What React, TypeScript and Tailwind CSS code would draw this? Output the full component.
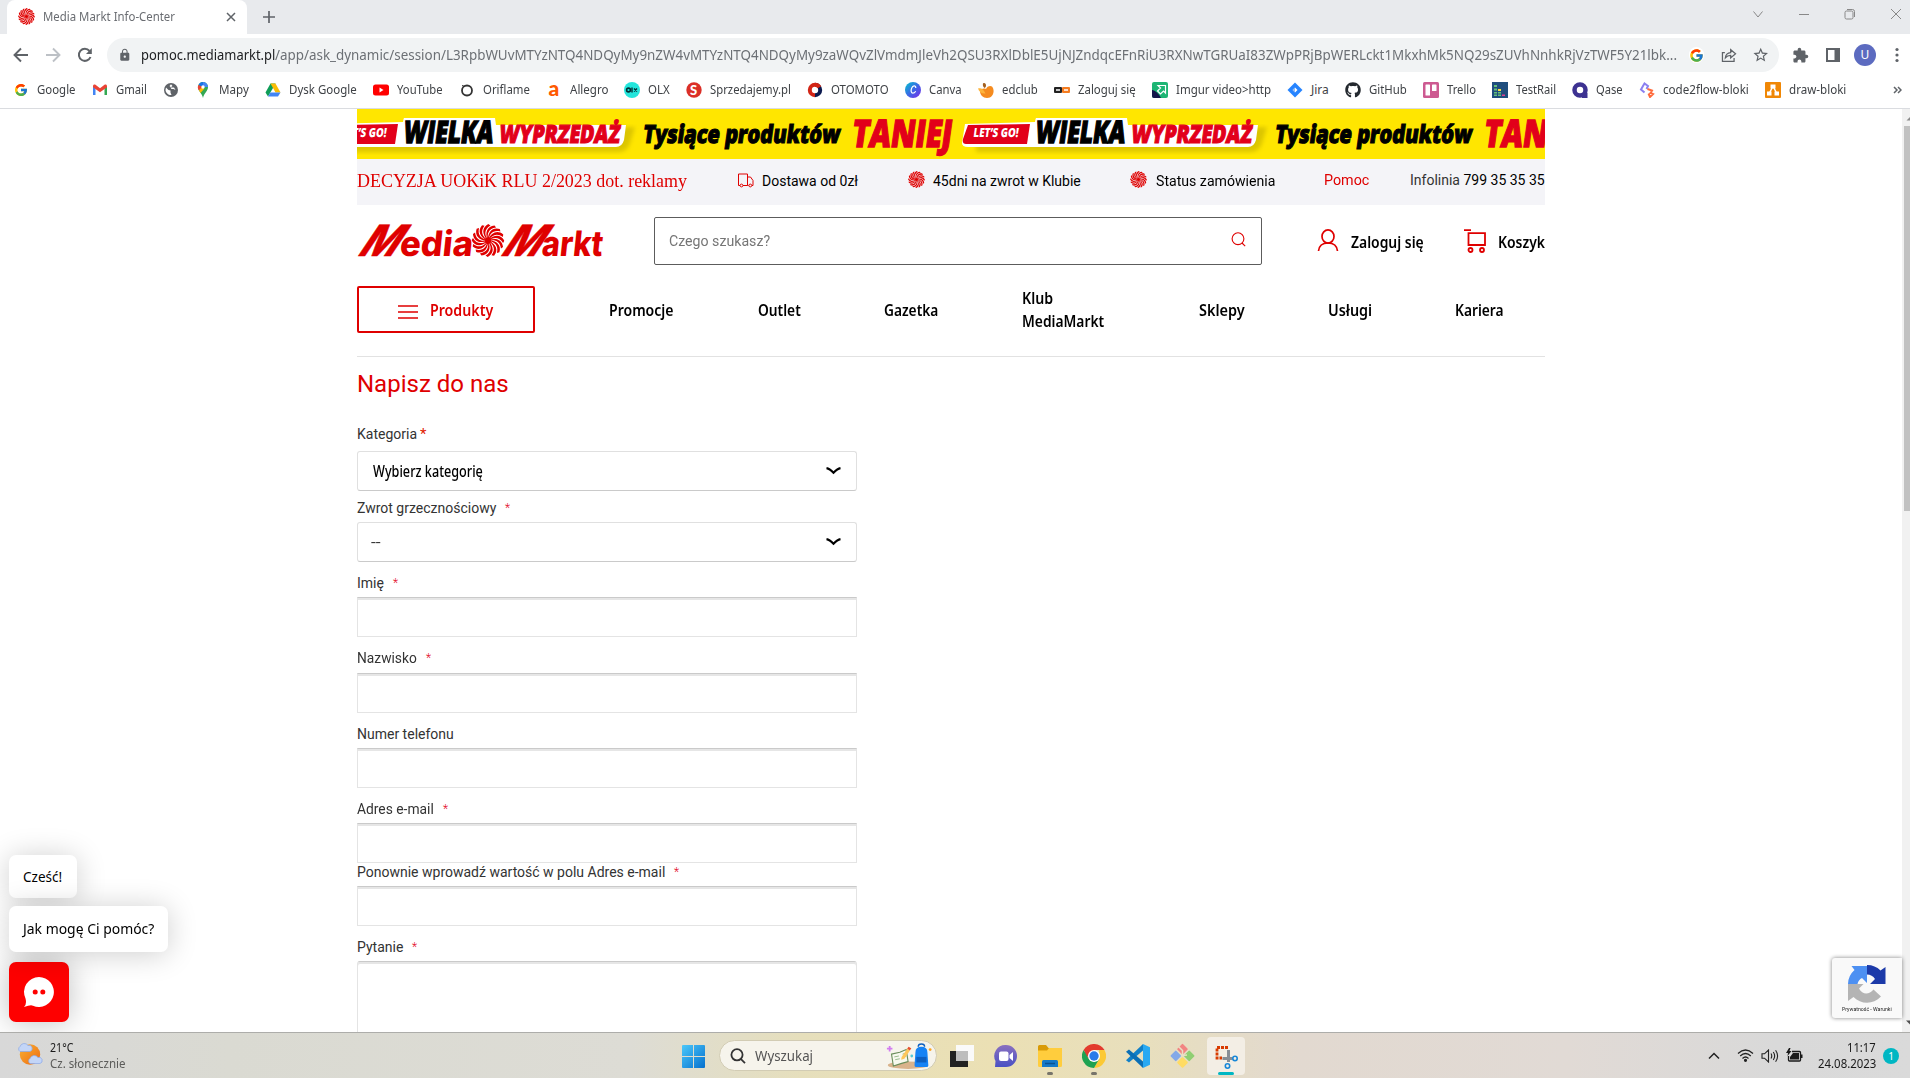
import React, { useLayoutEffect, useRef, useState } from "react";
import { FaGithub } from "react-icons/fa";
import { FcGoogle } from "react-icons/fc";
import { MdExtension, MdLock, MdStarBorder } from "react-icons/md";

/* Single-line text squeezed or stretched to a given width. */
function Fit({ w, className = "", children }: { w: number; className?: string; children: React.ReactNode }) {
  const ref = useRef<HTMLSpanElement>(null);
  const [scale, setScale] = useState(1);
  useLayoutEffect(() => {
    if (ref.current && ref.current.offsetWidth) setScale(w / ref.current.offsetWidth);
  }, [w]);
  return (
    <span className={"block shrink-0 whitespace-nowrap " + className} style={{ width: w }}>
      <span ref={ref} className="inline-block origin-left" style={{ transform: `scaleX(${scale})` }}>
        {children}
      </span>
    </span>
  );
}

const ARMS = Array.from({ length: 16 }, (_, i) => i * 22.5);
const ARM_PATH = "M0.5 0.3 C5 -3.6 11 -4 14.6 2.4 L15.9 0.3 C12.500 -6.2 6 -5.800 0.5 -0.8Z";

function Swirl({ size, className = "" }: { size: number; className?: string }) {
  return (
    <svg width={size} height={size} viewBox="-16 -16 32 32" className={"shrink-0 " + className}>
      <circle r="2.500" fill="#df0000" />
      {ARMS.map((a) => (
        <path key={a} transform={`rotate(${a})`} d={ARM_PATH} fill="#df0000" />
      ))}
    </svg>
  );
}

const BANNER_FONT = "'Open Sans', 'Noto Sans', sans-serif";

function PromoUnit({ x }: { x: number }) {
  return (
    <g transform={`translate(${x} 0)`} fontFamily={BANNER_FONT} fontWeight="800">
      <path d="M14 26 L305 18 L300 34 Q298 42 290 43 L14 43Z" fill="#d3bd00" opacity="0.8" filter="url(#soft)" />
      <path d="M3 15 L73 13 L74 9 L165 9 L166 16 L296 16 L294 31 Q292 38 286 38 L6 38 Q0 38 0 34Z" fill="#fff" />
      <path d="M6 16 L68 15 L65 35 L4 35 Q0 35 1 30Z" fill="#e2001a" />
      <g transform="skewX(-8)">
        <text x="15" y="28.500" fontSize="12.500" textLength="45" lengthAdjust="spacingAndGlyphs" fill="#fff">LET’S GO!</text>
        <text x="77" y="34" fontSize="31" textLength="90" lengthAdjust="spacingAndGlyphs" stroke="#fff" strokeWidth="4" fill="#fff">WIELKA</text>
        <text x="77" y="34" fontSize="31" textLength="90" lengthAdjust="spacingAndGlyphs" stroke="#000" strokeWidth="1.400">WIELKA</text>
        <text x="173" y="34" fontSize="25" textLength="121" lengthAdjust="spacingAndGlyphs" fill="#e2001a" stroke="#e2001a" strokeWidth="1.200">WYPRZEDAŻ</text>
        <text x="317" y="34" fontSize="25" textLength="197" lengthAdjust="spacingAndGlyphs" stroke="#000" strokeWidth="1.100">Tysiące produktów</text>
        <text x="526" y="38" fontSize="38" textLength="100" lengthAdjust="spacingAndGlyphs" fill="#e2001a" stroke="#e2001a" strokeWidth="1.400">TANIEJ</text>
      </g>
    </g>
  );
}

function Banner() {
  return (
    <svg width="1188" height="50" className="block overflow-hidden bg-[#ffe600]" viewBox="0 0 1188 50">
      <defs>
        <filter id="soft"><feGaussianBlur stdDeviation="2" /></filter>
      </defs>
      <PromoUnit x={-27} />
      <PromoUnit x={605} />
    </svg>
  );
}

function Logo() {
  return (
    <svg width="250" height="34" viewBox="0 0 250 34" className="overflow-visible" fontFamily="Inter, Lato, sans-serif" fontWeight="800" fill="#df0000">
      <g transform="translate(-1 32) skewX(-34)">
        <text x="0" y="0" fontSize="43" textLength="37" lengthAdjust="spacingAndGlyphs" stroke="#df0000" strokeWidth="0.5">M</text>
      </g>
      <g transform="translate(42 32) skewX(-6)">
        <text x="0" y="0" fontSize="35" textLength="73" lengthAdjust="spacingAndGlyphs">edia</text>
      </g>
      <circle cx="131" cy="16.500" r="16.500" fill="#fff" />
      <svg x="114.500" y="0" width="33" height="33" viewBox="-16 -16 32 32">
        <circle r="3" />
        {ARMS.map((a) => (
          <path key={a} transform={`rotate(${a})`} d={ARM_PATH} />
        ))}
      </svg>
      <g transform="translate(142 32) skewX(-34)">
        <text x="0" y="0" fontSize="43" textLength="37" lengthAdjust="spacingAndGlyphs" stroke="#df0000" strokeWidth="0.500">M</text>
      </g>
      <g transform="translate(184 32) skewX(-6)">
        <text x="0" y="0" fontSize="35" textLength="61" lengthAdjust="spacingAndGlyphs">arkt</text>
      </g>
    </svg>
  );
}

/* ---------- bookmark icons ---------- */
const Ic = ({ children, vb = "0 0 16 16" }: { children: React.ReactNode; vb?: string }) => (
  <svg width="16" height="16" viewBox={vb} className="shrink-0">{children}</svg>
);

const bookmarks: { icon: React.ReactNode; label?: string; w?: number }[] = [
  { icon: <FcGoogle size={16} className="shrink-0 scale-90" />, label: "Google", w: 39 },
  { icon: <Ic><path d="M1 13V4l2.500 1.500V13z" fill="#4285f4" /><path d="M12.500 13V5.500L15 4v9z" fill="#34a853" /><path d="M1 4c0-1.500 1.500-2 2.500-1.200L8 6.200l4.500-3.400C13.500 2 15 2.500 15 4v1.200L8 10.200 1 5.200z" fill="#ea4335" /></Ic>, label: "Gmail", w: 31 },
  { icon: <Ic><circle cx="8" cy="8" r="7" fill="#5f6368" /><path d="M3 5.500 5.500 8l2 .5v2l1 2.500c-3 .3-5.800-2-6-5z M8 2.200 6.500 4l1.500 1.500h3L12.500 8l-2-1h-2l-1-1.500L9.500 4z M13.500 8l-3 2.500" fill="#fff" /></Ic> },
  { icon: <Ic><path d="M8 0a5 5 0 0 0-5 5c0 4 4 6 5 11 1-5 5-7 5-11a5 5 0 0 0-5-5" fill="#34a853" /><path d="M8 0a5 5 0 0 1 5 5L8 5z" fill="#4285f4" /><path d="M8 0a5 5 0 0 0-4.500 3L8 5z" fill="#1a73e8" /><path d="M3.400 3A5 5 0 0 0 4 8.500L8 5z" fill="#ea4335" /><path d="M4 8.300 8 4l1 3-3.500 4z" fill="#fbbc04" /><circle cx="8" cy="5" r="1.700" fill="#fff" /></Ic>, label: "Mapy", w: 30 },
  { icon: <Ic><path d="M5.500 1.500h5L8 6 3 14.500.5 10.500z" fill="#0f9d58" /><path d="M5.500 1.500h5l5 9h-5z" fill="#fbbc04" /><path d="M5.500 10.500h10L13 14.500H3z" fill="#4285f4" /></Ic>, label: "Dysk Google", w: 68 },
  { icon: <Ic><rect x="0" y="2.500" width="16" height="11" rx="2.500" fill="#f00" /><path d="M6.500 5.500v5l4-2.500z" fill="#fff" /></Ic>, label: "YouTube", w: 46 },
  { icon: <Ic><circle cx="8" cy="8.500" r="5" fill="none" stroke="#333" strokeWidth="1.800" /><path d="M3 3.500 6 4.500" stroke="#333" strokeWidth="1" /></Ic>, label: "Oriflame", w: 46.5 },
  { icon: <Ic><text x="2.500" y="14" fontFamily="Lato, sans-serif" fontWeight="900" fontSize="21" fill="#ff5a00">a</text></Ic>, label: "Allegro", w: 38.5 },
  { icon: <Ic><circle cx="8" cy="8" r="8" fill="#23e5db" /><circle cx="4.500" cy="8" r="1.900" fill="none" stroke="#002f34" strokeWidth="1.600" /><path d="M8 5.500v5M10 6.500l3 3m0-3-3 3" stroke="#002f34" strokeWidth="1.400" /></Ic>, label: "OLX", w: 22 },
  { icon: <Ic><circle cx="8" cy="8" r="7.700" fill="#db2f27" /><text x="4" y="12.500" fontFamily="Lato, sans-serif" fontWeight="900" fontSize="13" fill="#fff">S</text></Ic>, label: "Sprzedajemy.pl", w: 81 },
  { icon: <Ic><path d="M8 2.800a5.200 5.200 0 0 0 0 10.400" fill="none" stroke="#d22516" strokeWidth="4" /><path d="M8 2.800a5.200 5.200 0 0 1 0 10.400" fill="none" stroke="#0c1a4f" strokeWidth="4" /><path d="M8 2.800q3 0 4.500 2.500" fill="none" stroke="#d22516" strokeWidth="4" /></Ic>, label: "OTOMOTO", w: 58 },
  { icon: <Ic><defs><linearGradient id="cv" x2="1" y2="1"><stop stopColor="#00c4cc" /><stop offset=".5" stopColor="#3b69e6" /><stop offset="1" stopColor="#7d2ae8" /></linearGradient></defs><circle cx="8" cy="8" r="8" fill="url(#cv)" /><path d="M10.800 6c0-3-3-2.500-4.200.2-1 2.500-.4 5 1.200 5 1.300 0 2.200-.8 2.900-1.900" fill="none" stroke="#fff" strokeWidth="1.200" /></Ic>, label: "Canva", w: 33 },
  { icon: <Ic><path d="M2 9c1-2.500 4-3 6-2 1-2.500 4-4 6-2.500 3 3 2 11.500-5 11.500-4 0-7-3-7-7" fill="#f58b1f" /><path d="M5 1.500c1.500-1 3 0 3 2 0 1-.5 2-1.500 2.500C5 5 4.500 3 5 1.500" fill="#a3601f" /><path d="M0 6.500c3-1 5.500.5 7.500 5-3.500.5-6.500-1.500-7.500-5" fill="#fdb43c" /></Ic>, label: "edclub", w: 36 },
  { icon: <Ic><rect x="0" y="5" width="8" height="6" rx="1" fill="#222" /><rect x="8" y="5" width="8" height="6" rx="1" fill="#f57c20" /><path d="M2 8h4m4 0h4" stroke="#fff" strokeWidth="1.500" /></Ic>, label: "Zaloguj się", w: 58 },
  { icon: <Ic><rect width="16" height="16" rx="2" fill="#1db574" /><path d="M6 3.500h7.500V11l-2-2-3 3-3-3 3-3z" fill="none" stroke="#fff" strokeWidth="1.200" /><path d="M0 8c3 0 7 4 9 8H2a2 2 0 0 1-2-2z" fill="#14154a" /></Ic>, label: "Imgur video>http", w: 95 },
  { icon: <Ic><path d="m8 .5 7.500 7.500L8 15.500.5 8z" fill="#2684ff" /><path d="m8 5.500 2.500 2.500L8 10.500 5.500 8z" fill="#fff" /><path d="M8 .5v5L5.500 8 8 10.500" fill="#1668e0" opacity=".45" /></Ic>, label: "Jira", w: 18 },
  { icon: <FaGithub size={16} className="shrink-0 text-[#24292f]" />, label: "GitHub", w: 38 },
  { icon: <Ic><rect width="16" height="16" rx="1.500" fill="#cd5a91" /><rect x="2.500" y="2.500" width="4.500" height="11" rx=".6" fill="#fff" /><rect x="9" y="2.500" width="4.500" height="6.500" rx=".6" fill="#fff" /></Ic>, label: "Trello", w: 29 },
  { icon: <Ic><rect width="16" height="16" fill="#1f4d7d" /><path d="M2 3h3v2H2zM2 6.500h3v2H2zM2 10h3v1.500H2zM2 12.500h3V14H2zM6 10h3v1.500H6zM6 12.500h3V14H6z" fill="#65c179" /><path d="M6 7h3v2H6z" fill="#ffe13c" /><path d="M10 12.500h3V14h-3z" fill="#e0408f" /></Ic>, label: "TestRail", w: 40 },
  { icon: <Ic><circle cx="8" cy="8" r="5.500" fill="none" stroke="#3d3291" strokeWidth="4.500" /><path d="M10 11h5.500v5H10z" fill="#3d3291" /></Ic>, label: "Qase", w: 27 },
  { icon: <Ic><g fill="none" strokeWidth="2"><path d="M5.500 10.500 2 7.500 4 4l1.500-2.500L9 4 7.500 7" stroke="#8b80f0" /><path d="m8.500 7 4.500 1.500L11.500 11l2.500 1-3 3-1.500-3.500" stroke="#ff6b3d" /></g></Ic>, label: "code2flow-bloki", w: 86 },
  { icon: <Ic><rect width="16" height="16" rx="1" fill="#f08705" /><path d="m8 4-4 8m4-8 4 8" stroke="#fff" strokeWidth="1.500" /><path d="M5.500 2.500h5v4h-5zM2 9.500h4.500v4H2zM9.500 9.500H14v4H9.500z" fill="#fff" /></Ic>, label: "draw-bloki", w: 57 },
];

function Browser() {
  return (
    <header className="shrink-0 font-['Noto_Sans','Open_Sans',sans-serif]">
      <div className="flex h-[34px] items-start bg-[#e8eaed] pl-[7px]">
        <div className="flex h-[34px] w-[240px] items-center rounded-t-lg bg-white pl-[11px] pb-px">
          <Swirl size={17} />
          <Fit w={132} className="ml-2 text-[12px] leading-4 text-[#6a6d72]">Media Markt Info-Center</Fit>
          <svg width="10" height="10" viewBox="0 0 10 10" className="ml-[51px]" stroke="#5f6368" strokeWidth="1.500"><path d="m1 1 8 8M9 1 1 9" /></svg>
        </div>
        <svg width="14" height="14" viewBox="0 0 14 14" className="ml-[15px] mt-[10px]" stroke="#5f6368" strokeWidth="1.700"><path d="M7 1v12M1 7h12" /></svg>
        <div className="ml-auto mr-2 mt-2 flex items-center gap-[34px] text-[#888]">
          <svg width="12" height="12" viewBox="0 0 12 12" fill="none" stroke="currentColor"><path d="m1.500 3.500 4.500 5.500 4.500-5.500" /></svg>
          <svg width="12" height="12" viewBox="0 0 12 12" fill="none" stroke="currentColor"><path d="M1 6.500h10" /></svg>
          <svg width="12" height="12" viewBox="0 0 12 12" fill="none" stroke="currentColor"><rect x="1" y="3" width="8" height="8" rx="1.500" /><path d="M3 1.500h5.500a2 2 0 0 1 2 2V9" /></svg>
          <svg width="12" height="12" viewBox="0 0 12 12" fill="none" stroke="currentColor"><path d="m1 1 10 10M11 1 1 11" /></svg>
        </div>
      </div>
      <div className="flex h-[42px] items-center pl-[13px]">
        <svg width="16" height="16" viewBox="0 0 16 16" fill="none" stroke="#5f6368" strokeWidth="1.900"><path d="M15 8H2M8 1.500 1.500 8 8 14.500" /></svg>
        <svg width="16" height="16" viewBox="0 0 16 16" fill="none" stroke="#bdc1c6" strokeWidth="1.900" className="ml-4"><path d="M1 8h13M8 1.500 14.500 8 8 14.500" /></svg>
        <svg width="16" height="16" viewBox="0 0 16 16" fill="none" stroke="#5f6368" strokeWidth="2" className="ml-4"><path d="M13.500 10A6 6 0 1 1 12.500 4" /><path d="M14.800 1v6H9z" fill="#5f6368" stroke="none" /></svg>
        <div className="ml-[14px] flex h-[34px] w-[1672px] items-center rounded-full bg-[#f1f3f4] pl-[11px] pr-[10px]">
          <MdLock size={14} className="text-[#5f6368]" />
          <div className="ml-[9px] flex text-[14px] leading-5">
            <Fit w={134} className="text-[#202124]">pomoc.mediamarkt.pl</Fit>
            <Fit w={1402} className="text-[#6c7075]">/app/ask_dynamic/session/L3RpbWUvMTYzNTQ4NDQyMy9nZW4vMTYzNTQ4NDQyMy9zaWQvZlVmdmJleVh2QSU3RXlDblE5UjNJZndqcEFnRiU3RXNwTGRUaI83ZWpPRjBpWERLckt1MkxhMk5NQ29sZUVhNnhkRjVzTWF5Y21lbk...</Fit>
          </div>
          <div className="ml-[12px] grid size-4 place-items-center rounded-full bg-white"><FcGoogle size={15} /></div>
          <svg width="16" height="16" viewBox="0 0 16 16" fill="none" stroke="#5f6368" strokeWidth="1.300" className="ml-[17px]"><path d="M4 5.500H1.500v9h12V11" /><path d="M4.500 11c.3-3.500 2.500-5.300 5.500-5.500V2.500L15 6.800 10 11V8.500C7.500 8.500 6 9.200 4.500 11z" /></svg>
          <MdStarBorder size={18} className="ml-[15px] text-[#5f6368]" />
        </div>
        <MdExtension size={17} className="ml-[13px] text-[#5f6368]" />
        <svg width="14" height="14" viewBox="0 0 14 14" className="ml-[17px]"><path d="M1 1h12v12H1z" fill="none" stroke="#5f6368" strokeWidth="2" /><path d="M8.500 1H13v12H8.500z" fill="#5f6368" /></svg>
        <div className="ml-[14px] grid size-[22px] place-items-center rounded-full bg-[#5c6bc0] text-[12px] leading-none text-white">U</div>
        <svg width="4" height="16" viewBox="0 0 4 16" className="ml-[19px]" fill="#5f6368"><circle cx="2" cy="2.500" r="1.600" /><circle cx="2" cy="8" r="1.600" /><circle cx="2" cy="13.500" r="1.600" /></svg>
      </div>
      <div className="flex h-[33px] items-center border-b border-[#dadce0] pl-[13px] pb-1">
        <div className="flex items-center gap-4">
          {bookmarks.map((b, i) => (
            <div key={i} className="flex items-center gap-2">
              {b.icon}
              {b.label && <Fit w={b.w!} className="text-[12px] leading-4 text-[#3f4246]">{b.label}</Fit>}
            </div>
          ))}
        </div>
        <svg width="9" height="8" viewBox="0 0 9 8" fill="none" stroke="#5f6368" strokeWidth="1.500" className="ml-auto mr-2"><path d="m1 1 3 3-3 3M5 1l3 3-3 3" /></svg>
      </div>
    </header>
  );
}

const navItems = [
  { lines: ["Promocje"], w: [65], gap: "ml-[74px]" },
  { lines: ["Outlet"], w: [43], gap: "ml-[84px]" },
  { lines: ["Gazetka"], w: [54], gap: "ml-[83px]" },
  { lines: ["Klub", "MediaMarkt"], w: [31, 82], gap: "ml-[84px]" },
  { lines: ["Sklepy"], w: [46], gap: "ml-[95px]" },
  { lines: ["Usługi"], w: [44], gap: "ml-[83px]" },
  { lines: ["Kariera"], w: [49], gap: "ml-[83px]" },
];

function Label({ text, w, star = true }: { text: string; w: number; star?: boolean }) {
  return (
    <div className="flex h-5 items-center text-[14px] leading-5 text-[#333]">
      <Fit w={w}>{text}</Fit>
      {star && <span className="ml-[9px] text-[12px] font-light text-[#e2001a]">*</span>}
    </div>
  );
}

const inputBase = "w-[500px] shrink-0 border border-[#e4e4e4] border-t-[#cacaca] shadow-[inset_0_2px_0_#e6e6e6]";

function TextField({ text, w, star, top, gap = "mt-[4px]" }: { text: string; w: number; star?: boolean; top: string; gap?: string }) {
  return (
    <div className={top}>
      <Label text={text} w={w} star={star} />
      <div className={inputBase + " h-[40px] " + gap} />
    </div>
  );
}

function Arrow() {
  return <svg width="15" height="9" viewBox="0 0 15 9" fill="none" stroke="#000" strokeWidth="2.200"><path d="M.5 1.200q3 .5 7 4.500 4-4 7-4.500" /></svg>;
}

function Page() {
  return (
    <main className="ml-[357px] w-[1188px] font-[Roboto,sans-serif]">
      <Banner />
      <div className="flex h-[46px] bg-[#f4f4f8] pt-[12px] text-[14px] leading-5 text-black">
        <Fit w={330} className="font-['Liberation_Serif',serif] text-[18px] leading-5 text-[#df0000]">DECYZJA UOKiK RLU 2/2023 dot. reklamy</Fit>
        <svg width="17" height="15" viewBox="0 0 17 15" className="ml-[50px] mt-[2px]" fill="none" stroke="#df0000" strokeWidth="1"><path d="M3 12.500H1.500V1h9v11.500H6M10.500 4h3l2.500 3.500v5h-1M10.500 12.500h1" /><circle cx="4.500" cy="12.500" r="1.400" /><circle cx="13.300" cy="12.500" r="1.400" /></svg>
        <Fit w={96} className="ml-[8px]">Dostawa od 0zł</Fit>
        <Swirl size={17} className="ml-[50px]" />
        <Fit w={148} className="ml-[8px]">45dni na zwrot w Klubie</Fit>
        <Swirl size={17} className="ml-[49px]" />
        <Fit w={119} className="ml-[9px]">Status zamówienia</Fit>
        <Fit w={45} className="-mt-px ml-[49px] text-[#df0000]">Pomoc</Fit>
        <Fit w={135} className="-mt-px ml-auto text-[#333]">Infolinia <span className="text-black">799 35 35 35</span></Fit>
      </div>
      <div className="flex h-[72px] pt-[12px]">
        <div className="w-[297px] pt-[7px]"><Logo /></div>
        <div className="flex h-[48px] w-[608px] items-center rounded-[2px] border border-[#5c5c5c] pl-[14px] pr-[15px] text-[14px] text-[#757575]">
          <Fit w={101}>Czego szukasz?</Fit>
          <svg width="15" height="15" viewBox="0 0 15 15" fill="none" stroke="#df0000" strokeWidth="1.100" className="ml-auto -mt-[3px]"><circle cx="7" cy="6.700" r="5.900" /><path d="m11 11 3.200 3.200" /></svg>
        </div>
        <div className="ml-auto flex font-['Noto_Sans',sans-serif] text-[16px] font-semibold leading-6 text-black">
          <svg width="22" height="23" viewBox="0 0 22 23" className="mt-[12px]" fill="none" stroke="#df0000" strokeWidth="1.700"><ellipse cx="11" cy="7.500" rx="6" ry="6.600" /><path d="M1.500 22c.5-5 4-8 9.500-8s9 3 9.500 8" /></svg>
          <Fit w={73} className="ml-[12px] mt-[13px]">Zaloguj się</Fit>
          <svg width="23" height="24" viewBox="0 0 23 24" className="ml-[40px] mt-[12px]" fill="none" stroke="#df0000" strokeWidth="1.800"><path d="M0 1.200h7M4.500 4.200H21V16H4.500z" /><circle cx="6.500" cy="21" r="2" /><circle cx="18" cy="21" r="2" /></svg>
          <Fit w={47} className="ml-[11px] mt-[13px]">Koszyk</Fit>
        </div>
      </div>
      <nav className="flex h-[80px] items-center border-b border-[#e2e2e2] pb-[14px] font-['Noto_Sans',sans-serif] text-[16px] font-semibold leading-[23px] text-black">
        <div className="flex h-[47px] w-[178px] items-center rounded-[2px] border-2 border-[#df0000] pl-[39px] text-[#df0000]">
          <svg width="20" height="14" viewBox="0 0 20 14" stroke="#df0000" strokeWidth="1.600" className="mt-[5px]"><path d="M0 1h20M0 7h20M0 13h20" /></svg>
          <Fit w={63} className="ml-[12px] mt-[2px]">Produkty</Fit>
        </div>
        {navItems.map((n) => (
          <div key={n.lines[0]} className={n.gap + (n.lines.length === 1 ? " mt-[2px]" : "")}>
            {n.lines.map((l, i) => <Fit key={l} w={n.w[i]}>{l}</Fit>)}
          </div>
        ))}
      </nav>
      <form className="w-[500px]">
        <Fit w={152} className="mt-[11px] text-[24px] leading-8 text-[#df0000]">Napisz do nas</Fit>
        <div className="mt-[24px] flex h-5 items-center text-[14px] leading-5 text-[#333]">
          <Fit w={60}>Kategoria</Fit><span className="ml-[3px] text-[15px] text-[#df2000]">*</span>
        </div>
        <div className="mt-[7px] flex h-[40px] items-center rounded-[3px] border border-[#e0e0e0] border-b-[#cacaca] pl-[15px] pr-[15px]">
          <Fit w={110} className="font-['Noto_Sans',sans-serif] text-[16px] font-medium leading-5 text-black">Wybierz kategorię</Fit>
          <span className="ml-auto"><Arrow /></span>
        </div>
        <div className="mt-[7px]"><Label text="Zwrot grzecznościowy" w={139} /></div>
        <div className="mt-[4px] flex h-[40px] items-center rounded-[3px] border border-[#e0e0e0] border-b-[#cacaca] pl-[13px] pr-[15px] text-[14px] text-[#333]">
          <Fit w={10}>--</Fit>
          <span className="ml-auto"><Arrow /></span>
        </div>
        <TextField text="Imię" w={27} top="mt-[11px]" />
        <TextField text="Nazwisko" w={60} top="mt-[11px]" gap="mt-[5px]" />
        <TextField text="Numer telefonu" w={97} star={false} top="mt-[11px]" />
        <TextField text="Adres e-mail" w={77} top="mt-[11px]" />
        <TextField text="Ponownie wprowadź wartość w polu Adres e-mail" w={308} top="-mt-px" />
        <div className="mt-[11px]"><Label text="Pytanie" w={46} /></div>
        <div className={inputBase + " mt-[4px] h-[120px] rounded-[3px]"} />
      </form>
    </main>
  );
}

function ChatWidget() {
  return (
    <div className="absolute bottom-[10px] left-[9px] flex flex-col items-start font-['Noto_Sans',sans-serif] text-[13.5px] leading-5 text-black">
      <div className="flex h-[43px] w-[68px] items-center rounded-[7px] bg-white pl-[14px] shadow-[0_2px_30px_rgba(0,0,0,0.2)]"><Fit w={39}>Cześć!</Fit></div>
      <div className="relative mt-2 flex h-[46px] w-[159px] items-center rounded-[7px] bg-white pl-[14px] shadow-[0_2px_30px_rgba(0,0,0,0.2)]"><Fit w={131}>Jak mogę Ci pomóc?</Fit></div>
      <div className="mt-[10px] grid size-[60px] place-items-center rounded-[7px] bg-[#fe0000] shadow-[0_0_30px_rgba(0,0,0,0.25)]">
        <svg width="30" height="30" viewBox="0 0 30 30"><path d="M15 0a15 15 0 1 1-6 28.800Q7 27.500 0 30q3-3 1.500-8.500A15 15 0 0 1 15 0" fill="#fff" /><circle cx="11.200" cy="15" r="2.500" fill="#fe0000" /><circle cx="18.800" cy="15" r="2.500" fill="#fe0000" /></svg>
      </div>
    </div>
  );
}

function Recaptcha() {
  return (
    <div className="absolute bottom-[14px] right-[8px] flex h-[60px] w-[70px] flex-col overflow-hidden rounded-l-[3px] bg-[#f9f9f9] pl-[10px] pt-[7px] shadow-[0_0_4px_#808080]">
      <svg width="38" height="38" viewBox="0 0 38 38" className="ml-[6px] shrink-0">
        <path d="M19 0a19 19 0 0 1 13.500 5.500L37.500 2v17H22l5-5a9.500 9.500 0 0 0-8-4.500z" fill="#1c3aa9" />
        <path d="M0 19A19 19 0 0 1 6.500 5L3.500 1H19v17l-5-5a9 9 0 0 0-4.500 6z" fill="#4d90f2" />
        <path d="M0 19h15.500l-4.500 4.500c3.500 6.500 10 6.500 14.500 1L33 31.500c-8 8.500-20 8-27.500.5L0 36z" fill="#b4b4b4" />
      </svg>
      <Fit w={50} className="mt-[1px] font-[Roboto,sans-serif] text-[6px] leading-[9px] text-[#222]">Prywatność - Warunki</Fit>
    </div>
  );
}

function Taskbar() {
  return (
    <footer className="flex h-[46px] shrink-0 border-t border-[#adadaa] bg-[linear-gradient(90deg,#d8d8d8_0%,#dadad2_12%,#dddcd5_33%,#e6dfbc_42%,#ebe0b4_52%,#e8dfbd_60%,#e2d9d0_68%,#e1dad5_82%,#d9d9d9_93%,#dadada_100%)] font-['Noto_Sans',sans-serif] text-[12px] leading-4 text-[#1a1a1a]">
      <svg width="26" height="24" viewBox="0 0 26 24" className="ml-[17px] mt-[9px]">
        <defs><linearGradient id="sun" x2="1" y2="1"><stop stopColor="#f9b233" /><stop offset="1" stopColor="#ee6a12" /></linearGradient></defs>
        <circle cx="13" cy="12.500" r="10.200" fill="url(#sun)" />
        <path d="M3 9.500a3 3 0 0 1 0-5 4.500 4.500 0 0 1 8-1 3 3 0 0 1 2 6z" fill="#c3d5f7" stroke="#8aa8e6" strokeWidth=".7" />
        <path d="M13 21.500a3 3 0 0 1 0-5 4.500 4.500 0 0 1 8-1 3 3 0 0 1 2 6z" fill="#c3d5f7" stroke="#8aa8e6" strokeWidth=".7" />
      </svg>
      <div className="ml-[7px] w-[632px] pt-[7px]">
        <Fit w={23}>21°C</Fit>
        <Fit w={76} className="text-[#5c5c5a]">Cz. słonecznie</Fit>
      </div>
      <svg width="23" height="23" viewBox="0 0 23 23" className="mt-[12px]">
        <defs><linearGradient id="win" x2="1" y2="1"><stop stopColor="#4cc8fa" /><stop offset="1" stopColor="#0570ce" /></linearGradient></defs>
        <path d="M0 1a1 1 0 0 1 1-1h10v11H0zM12 0h10a1 1 0 0 1 1 1v10H12zM0 12h11v11H1a1 1 0 0 1-1-1zM12 12h11v10a1 1 0 0 1-1 1H12z" fill="url(#win)" />
      </svg>
      <div className="ml-[14px] mt-[7px] flex h-[31px] w-[218px] items-center rounded-full border border-[#d2ccb4] bg-[#f6f4ec] pl-[10px] text-[14px] text-[#555]">
        <svg width="16" height="16" viewBox="0 0 16 16" fill="none" stroke="#333" strokeWidth="1.800"><circle cx="7" cy="6.800" r="5.600" /><path d="m11 11.200 4 4" /></svg>
        <Fit w={58} className="ml-[9px]">Wyszukaj</Fit>
        <svg width="46" height="26" viewBox="0 0 50 28" className="ml-[73px]">
          <ellipse cx="24" cy="24" rx="22" ry="4" fill="#d9b38c" />
          <path d="m6 12 9-2 7-3 2 13-7 2-9 3z" fill="#f7f9ee" stroke="#6a8d5a" strokeWidth="1.200" />
          <path d="m9 15 5-1m-4 4 5-1m3-5 3-1m-2 4 3-1" stroke="#7aa56c" strokeWidth=".8" />
          <path d="m17 15 6-9 3 2-6 9-3.500 1z" fill="#ffc65a" /><path d="m23 6 1.500-2 3 1.500L26 8z" fill="#e5502e" />
          <path d="M32 10q0-6 6.500-6T45 10l1 14q0 2-2 2H33q-2 0-2-2z" fill="#1683f5" /><path d="M35 4q0-3 3.500-3T42 4" fill="none" stroke="#0d5fc0" strokeWidth="1.500" /><path d="M33 15h11v6H33z" fill="#0d5fc0" />
          <path d="M4 3v6M1 6h6" stroke="#d27df0" strokeWidth="2" /><circle cx="48" cy="7" r="1.500" fill="#ffa41c" /><circle cx="28" cy="14" r="1.500" fill="#52c9d8" />
        </svg>
      </div>
      <svg width="24" height="22" viewBox="0 0 24 22" className="ml-[13px] mt-[12px]"><path d="M0 6h18v16H0z" fill="#222" /><path d="M6 0h18v16H6z" fill="#fafafa" /><path d="M6 6h12v10H6z" fill="#bdbdbd" /></svg>
      <svg width="24" height="24" viewBox="0 0 24 24" className="ml-[20px] mt-[11px]"><defs><linearGradient id="tm" x2="0" y2="1"><stop stopColor="#8a70bf" /><stop offset="1" stopColor="#4a51c4" /></linearGradient></defs><path d="M12 1a11 11 0 0 1 0 22H1l.5-6A11 11 0 0 1 12 1" fill="url(#tm)" /><rect x="5" y="7.500" width="9.500" height="9.500" rx="2" fill="#fff" /><path d="m15.500 11 3.500-3v9l-3.500-3z" fill="#fff" /></svg>
      <div className="ml-[20px] flex flex-col items-center pt-[12px]">
        <svg width="24" height="22" viewBox="0 0 24 22"><path d="M0 1.500Q0 0 1.500 0H8l2.500 3H22v4H0z" fill="#d99a06" /><path d="M0 5.500 9 5.500 11 3h13v17.500a1.500 1.500 0 0 1-1.500 1.500h-21A1.500 1.500 0 0 1 0 20.500z" fill="#ffcd3d" /><path d="M4 22v-5.500Q4 15 5.500 15h13q1.500 0 1.500 1.500V22z" fill="#1679c7" /><path d="M7 18.500h10" stroke="#0b5292" strokeWidth="1.500" /></svg>
        <span className="mt-[5px] h-[3px] w-[6px] rounded-full bg-[#77746a]" />
      </div>
      <div className="ml-[20px] flex flex-col items-center pt-[11px]">
        <svg width="24" height="24" viewBox="0 0 24 24"><path d="M12 12H1.600A12 12 0 0 1 22.400 6L12 6z" fill="#e33b2e" /><path d="M22.400 6A12 12 0 0 1 12 24l5.200-9V6z" fill="#fcc934" /><path d="M1.600 6A12 12 0 0 1 22.400 6H12L6.800 15z" fill="#e33b2e" /><path d="M1.600 6 6.800 15 12 18l5.200-3L12 24A12 12 0 0 1 1.600 6" fill="#1fa251" /><circle cx="12" cy="12" r="6" fill="#fff" /><circle cx="12" cy="12" r="4.700" fill="#2b7bea" /></svg>
        <span className="mt-[4px] h-[3px] w-[6px] rounded-full bg-[#77746a]" />
      </div>
      <svg width="24" height="24" viewBox="0 0 24 24" className="ml-[20px] mt-[11px]"><path d="M17 0 24 3.300v17.400L17 24z" fill="#29a9f2" /><path d="M17 0v6.500L3 18.500 0 16.300z" fill="#1180c8" /><path d="M17 24v-6.500L3 5.500 0 7.700z" fill="#0b6fb5" /></svg>
      <svg width="25" height="25" viewBox="0 0 25 25" className="ml-[20px] mt-[10px]"><g transform="rotate(45 12.500 12.500)"><rect x="4" y="4" width="8" height="8" rx="1" fill="#f28482" /><rect x="13.500" y="4" width="8" height="8" rx="1" fill="#8fcf72" /><rect x="4" y="13.500" width="8" height="8" rx="1" fill="#84a9e8" /><rect x="13.500" y="13.500" width="8" height="8" rx="1" fill="#ffdc63" /></g><path d="m8 3 4.500 4.500v5L17 12" fill="none" stroke="#e9dfc4" strokeWidth="1.500" /></svg>
      <div className="ml-[12px] mt-[4px] flex h-[38px] w-[38px] flex-col items-center rounded-[4px] bg-[#f3eee5] pt-[8px]">
        <svg width="24" height="24" viewBox="0 0 24 24"><path d="M14 2.500H3v10.500h5" fill="none" stroke="#d83b01" strokeWidth="2.800" strokeDasharray="3 1" /><path d="M14.500 5v12M8.500 13.500h10" stroke="#888e96" strokeWidth="3" /><circle cx="21" cy="13.500" r="2.200" fill="none" stroke="#1787d8" strokeWidth="1.600" /><circle cx="13.500" cy="21" r="2.200" fill="none" stroke="#1787d8" strokeWidth="1.600" /></svg>
        <span className="mt-[3px] h-[3px] w-[16px] rounded-full bg-[#00b7c3]" />
      </div>
      <div className="ml-auto flex items-start">
        <svg width="12" height="8" viewBox="0 0 12 8" fill="none" stroke="#222" strokeWidth="1.500" className="mt-[19px]"><path d="m1 6.500 5-5 5 5" /></svg>
        <svg width="17" height="13" viewBox="0 0 17 13" fill="none" stroke="#222" strokeWidth="1.200" className="ml-[17px] mt-[16px]"><path d="M1 4.500q7.500-7 15 0M3.200 7q5.300-5 10.600 0M5.500 9.500q3-3 6 0" /><circle cx="8.500" cy="11.300" r="1" fill="#222" /></svg>
        <svg width="18" height="14" viewBox="0 0 18 14" fill="none" stroke="#222" strokeWidth="1.100" className="ml-[7px] mt-[16px]"><path d="M1 4.800h2.500L7.500 1v12L3.500 9.200H1zM10 4.500q1.500 2.500 0 5M12.300 3q2.700 4 0 8M14.600 1.300q4 5.700 0 11.400" /></svg>
        <svg width="17" height="14" viewBox="0 0 17 14" className="ml-[7px] mt-[15px]"><path d="M6 3.500h7.500a1 1 0 0 1 1 1V12a1 1 0 0 1-1 1h-10a1 1 0 0 1-1-1V8" fill="none" stroke="#1a1a1a" strokeWidth="1.300" /><path d="M7 5h6v6.500H4V9zM15 6.500h1.500v3.500H15zM3 0 0 5h2L1.500 8 5.500 3H3.500L4.500 0z" fill="#1a1a1a" /></svg>
        <div className="ml-[15px] flex w-[58px] flex-col items-end pt-[7px]"><Fit w={29}>11:17</Fit><Fit w={58}>24.08.2023</Fit></div>
        <span className="ml-[7px] mr-[11px] mt-[15px] grid size-4 place-items-center rounded-full bg-[#00b7c3] text-[10px] leading-none text-white">1</span>
      </div>
    </footer>
  );
}

export default function App() {
  return (
    <div className="flex h-[1078px] w-[1910px] flex-col overflow-hidden bg-white">
      <Browser />
      <div className="relative flex min-h-0 flex-1 overflow-hidden">
        <div className="w-[1902px] overflow-hidden"><Page /></div>
        <div className="flex w-[8px] flex-col bg-[#f1f1f1] pl-[2px]">
          <svg width="6" height="17" viewBox="0 0 6 17"><path d="m6 8-3.500 3.500H6z" fill="#8a8a8a" /></svg>
          <div className="h-[385px] bg-[#c1c1c1]" />
          <svg width="6" height="14" viewBox="0 0 6 14" className="mt-auto"><path d="M2 2.500h4V6.500z" fill="#505050" /></svg>
        </div>
        <ChatWidget />
        <Recaptcha />
      </div>
      <Taskbar />
    </div>
  );
}
